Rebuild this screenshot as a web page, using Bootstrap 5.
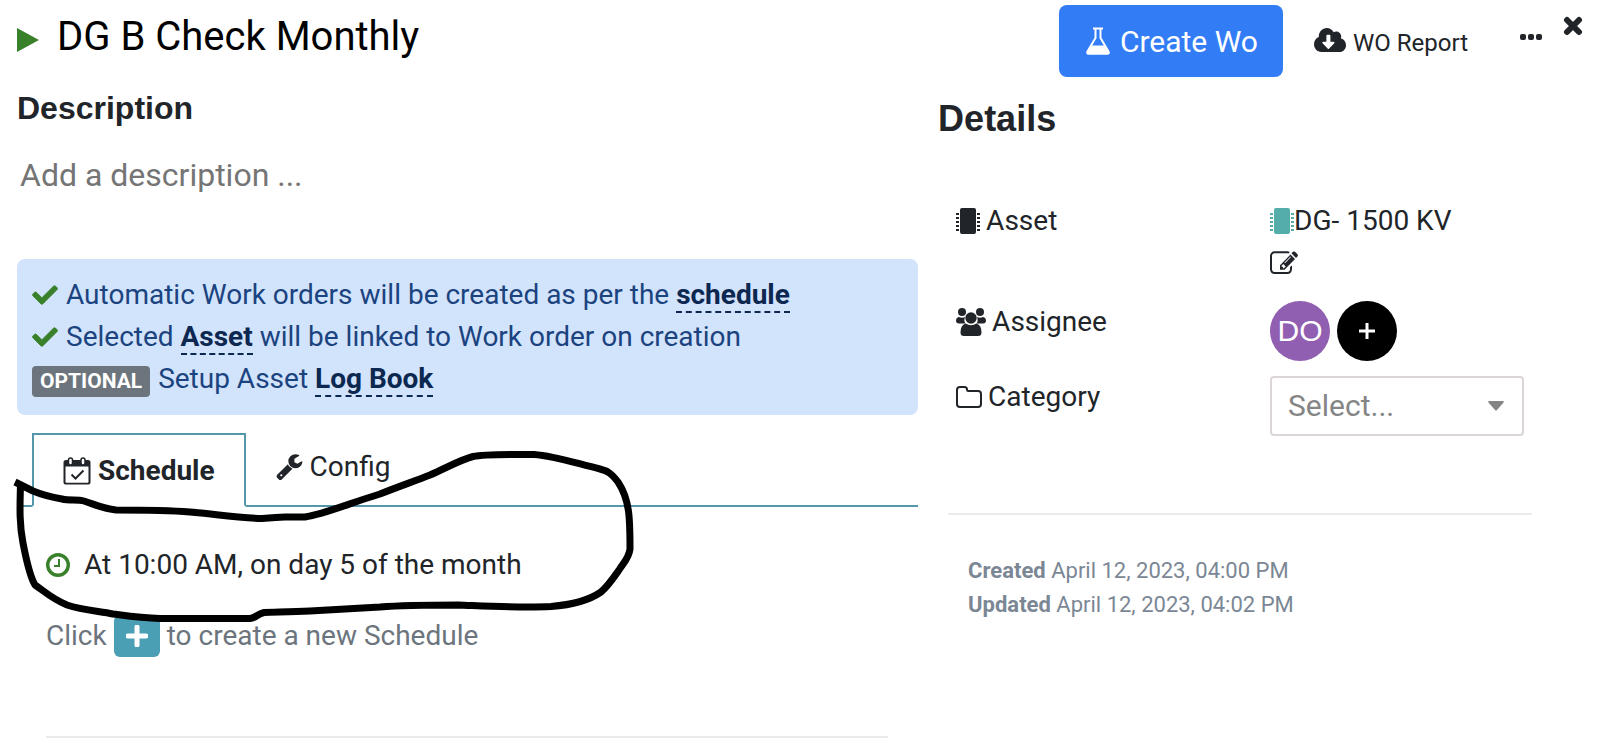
<!DOCTYPE html>
<html lang="en">
<head>
<meta charset="utf-8">
<meta name="viewport" content="width=device-width, initial-scale=1">
<title>DG B Check Monthly</title>
<link href="https://cdn.jsdelivr.net/npm/bootstrap@5.3.0/dist/css/bootstrap.min.css" rel="stylesheet">
<style>
  body { font-family: Roboto, "Liberation Sans", sans-serif; font-size: 28px; line-height: 42px; color: #212529; background: #fff; }
  svg { flex-shrink: 0; }
  .pane-main { flex: 0 0 58%; padding: 0 18px 0 17px; min-width: 0; }
  .pane-side { flex: 1 1 0; padding: 5px 31px 0 2px; min-width: 0; }
  .wo-title { font-size: 40px; line-height: 74px; font-weight: 400; color: #000; gap: 18px; }
  .sub-title { font-family: "Liberation Sans", sans-serif; font-weight: 700; font-size: 32px; line-height: 48px; margin: 10px 0 19px; }
  .desc-input { border: 0; padding: 0 3px; font-size: 32px; height: 48px; line-height: 48px; margin-bottom: 60px; color: #212529; }
  .desc-input::placeholder { color: #757575; opacity: 1; }
  .info-box { background: #d2e3fc; color: #1b437f; border: 0; border-radius: 8px; padding: 15px; margin-bottom: 18px; }
  .info-box a { color: #0c2850; font-weight: 700; text-decoration: none; border-bottom: 2px dashed #0c2850; }
  .info-line { gap: 8px; }
  .opt-tag { background: #6c757d; font-size: 21px; font-weight: 700; line-height: 31px; padding: 0 8px; border-radius: 4px; margin-top: 4px; }
  .wo-tabs { padding-left: 15px; border-bottom: 2px solid #5497ab; }
  .wo-tabs .nav-link { color: #212529; border: 0; border-radius: 0; padding: 13px 30px 16px; gap: 7px; line-height: 42px; }
  .wo-tabs .nav-link.active { color: #212529; border: 2px solid #5497ab; border-bottom-color: #fff; padding: 15px 29px 13px; margin-bottom: -2px; font-weight: 700; gap: 7px; }
  .rule { height: 2px; border: 0; opacity: 1; background: #ebebeb; }
  .sched { padding: 37px 30px 0 29px; }
  .sched-line { gap: 14px; margin-bottom: 29px; }
  .sched-new { gap: 7px; color: #6c757d; }
  .add-btn { width: 46px; height: 42px; padding: 0; background: #4a9fb5; border: 0; border-radius: 6px; }
  .sched .rule { margin: 79px 0 0; }
  .create-btn { background: #327df6; border: 0; border-radius: 8px; height: 72px; padding: 0 25px; font-size: 30px; gap: 8px; }
  .plain-btn { border: 0; padding: 0; background: none; color: #212529; }
  .report-btn { height: 76px; font-size: 24px; gap: 7px; margin: 0 51px 0 31px; }
  .more-btn { height: 64px; margin-right: 20px; }
  .close-btn { height: 42px; }
  .top-row { height: 72px; }
  .side-title { font-family: "Liberation Sans", sans-serif; font-weight: 700; font-size: 36px; line-height: 54px; margin: 15px 0 54px; }
  .fields { margin-left: 10px; margin-right: 7px; }
  .fields .row { --bs-gutter-x: 16px; margin: 0 0 15px; }
  .fields .row > * { padding: 0 8px; }
  .field-name { gap: 6px; height: 42px; }
  .edit-btn { height: 40px; }
  .face { width: 60px; height: 60px; background: #915fb1; color: #fff; font: 30px/60px "Liberation Sans", sans-serif; }
  .face-add { background: #000; }
  .cat-select { width: 254px; height: 60px; font-size: 30px; line-height: 42px; color: #858585; border: 2px solid #dbd5d7; border-radius: 4px; padding: 0 44px 0 16px;
    background-image: url("data:image/svg+xml,%3Csvg xmlns='http://www.w3.org/2000/svg' viewBox='0 0 16 10'%3E%3Cpath d='M1 0h14l1 1-7 8q-1 1-2 0L0 1z' fill='%23858585'/%3E%3C/svg%3E"); background-size: 16px 10px; background-position: right 18px center; }
  .fields .rule { margin: 77px 44px 39px 0; }
  .stamps { font-size: 22px; line-height: 34px; color: #7b8795; padding-left: 20px; }
  .ink { left: 0; top: 0; pointer-events: none; }
</style>
</head>
<body>
<main class="d-flex position-relative">
  <section class="pane-main">
    <h1 class="wo-title d-flex align-items-center mb-0">
      <svg width="22" height="24" viewBox="0 0 22 24" style="margin-top:6px"><path d="M0 0l22 12L0 24z" fill="#38802a"/></svg>
      DG B Check Monthly
    </h1>
    <h2 class="sub-title"><label for="desc">Description</label></h2>
    <input id="desc" class="desc-input d-block w-100" type="text" placeholder="Add a description ...">
    <div class="info-box">
      <div class="info-line d-flex align-items-center">
        <svg width="26" height="26" viewBox="-10 0 532 512"><path fill="#38802a" stroke="#38802a" stroke-width="16" d="M173.898 439.404l-166.4-166.4c-9.997-9.997-9.997-26.206 0-36.204l36.203-36.204c9.997-9.998 26.207-9.998 36.204 0L192 312.690 432.095 72.596c9.997-9.997 26.207-9.997 36.204 0l36.203 36.204c9.997 9.997 9.997 26.206 0 36.204l-294.400 294.401c-9.998 9.997-26.207 9.997-36.204-.001z"/></svg>
        <span>Automatic Work orders will be created as per the <a href="#">schedule</a></span>
      </div>
      <div class="info-line d-flex align-items-center">
        <svg width="26" height="26" viewBox="-10 0 532 512"><path fill="#38802a" stroke="#38802a" stroke-width="16" d="M173.898 439.404l-166.4-166.4c-9.997-9.997-9.997-26.206 0-36.204l36.203-36.204c9.997-9.998 26.207-9.998 36.204 0L192 312.690 432.095 72.596c9.997-9.997 26.207-9.997 36.204 0l36.203 36.204c9.997 9.997 9.997 26.206 0 36.204l-294.400 294.401c-9.998 9.997-26.207 9.997-36.204-.001z"/></svg>
        <span>Selected <a href="#">Asset</a> will be linked to Work order on creation</span>
      </div>
      <div class="info-line d-flex align-items-center">
        <span class="badge opt-tag">OPTIONAL</span>
        <span>Setup Asset <a href="#">Log Book</a></span>
      </div>
    </div>
    <ul class="nav nav-tabs wo-tabs" role="tablist">
      <li class="nav-item" role="presentation"><button class="nav-link active d-flex align-items-center" type="button" role="tab" aria-selected="true">
        <svg width="28" height="28" viewBox="0 0 28 28"><path d="M3 3h22q2.500 0 2.500 2.500V25.500q0 2-2 2H2.500q-2 0-2-2V5.500Q.5 3 3 3zM2.500 9.500V25q0 .7.700.7H24.800q.7 0 .7-.7V9.500z" fill="#212529" fill-rule="evenodd"/><rect x="5.500" y="1" width="4" height="7" rx="2" fill="#fff" stroke="#212529" stroke-width="1.500"/><rect x="18" y="1" width="4" height="7" rx="2" fill="#fff" stroke="#212529" stroke-width="1.500"/><path d="M8.500 17.500l4 4 8-8" fill="none" stroke="#212529" stroke-width="2"/></svg>
        Schedule</button></li>
      <li class="nav-item" role="presentation"><button class="nav-link d-flex align-items-center" type="button" role="tab" aria-selected="false">
        <svg width="27" height="26" viewBox="20 120 1642 1652"><path fill="#212529" d="M384 1472q0-26-19-45t-45-19-45 19-19 45 19 45 45 19 45-19 19-45zm644-420l-682 682q-37 37-90 37-52 0-91-37l-106-108q-38-36-38-90 0-53 38-91l681-681q39 98 114.500 173.500t173.500 114.500zm634-435q0 39-23 106-47 134-164.500 217.500t-258.500 83.500q-185 0-316.500-131.500t-131.500-316.500 131.500-316.500 316.500-131.500q58 0 121.500 16.500t107.500 46.500q16 11 16 28t-16 28l-293 169v224l193 107q5-3 79-48.500t135.500-81 70.500-35.500q15 0 23.500 10t8.500 25z"/></svg>
        Config</button></li>
    </ul>
    <div class="sched">
      <div class="sched-line d-flex align-items-center">
        <svg width="24" height="24" viewBox="0 0 24 24" fill="none" stroke="#38802a"><circle cx="12" cy="12" r="10.300" stroke-width="3.400"/><path d="M13 6v7H8" stroke-width="2"/></svg>
        <span>At 10:00 AM, on day 5 of the month</span>
      </div>
      <div class="sched-new d-flex align-items-center">
        <span>Click</span>
        <button class="add-btn btn d-flex align-items-center justify-content-center" type="button" aria-label="Add schedule"><svg width="22" height="22" viewBox="0 0 22 22"><path d="M11 2v18M2 11h18" stroke="#fff" stroke-width="5" stroke-linecap="round"/></svg></button>
        <span>to create a new Schedule</span>
      </div>
      <hr class="rule">
    </div>
  </section>

  <aside class="pane-side">
    <div class="top-row d-flex align-items-start justify-content-end">
      <button class="create-btn btn btn-primary d-flex align-items-center text-nowrap" type="button">
        <svg width="28" height="28" viewBox="0 0 28 28"><path d="M9 1.500h10M11.500 2v9L3.500 24.500q-1 2.200 1.200 2.200h18.600q2.200 0 1.200-2.200L16.500 11V2" fill="none" stroke="#fff" stroke-width="2"/><path d="M8 18.500h12l5 7.500H3z" fill="#fff"/></svg>
        Create Wo</button>
      <button class="plain-btn report-btn d-flex align-items-center text-nowrap" type="button">
        <svg width="32" height="24" viewBox="0 32 640 448" preserveAspectRatio="none" style="margin-bottom:6px"><path fill="#212529" d="M537.600 226.600c4.100-10.700 6.400-22.400 6.400-34.600 0-53-43-96-96-96-19.700 0-38.100 6-53.300 16.200C367 64.200 315.300 32 256 32c-88.400 0-160 71.600-160 160 0 2.700.1 5.400.2 8.100C40.200 219.800 0 273.200 0 336c0 79.500 64.500 144 144 144h368c70.700 0 128-57.300 128-128 0-61.900-44-113.600-102.400-125.400zm-132.900 88.700L299.300 420.700c-6.200 6.200-16.400 6.200-22.600 0L171.300 315.300c-10.100-10.100-2.900-27.300 11.300-27.300H248V176c0-8.800 7.200-16 16-16h48c8.800 0 16 7.200 16 16v112h65.400c14.200 0 21.400 17.200 11.300 27.300z"/></svg>
        WO Report</button>
      <button class="plain-btn more-btn d-flex align-items-center" type="button" aria-label="More"><svg width="24" height="6" viewBox="0 0 24 6" fill="#212529"><rect x="1" width="6" height="6" rx="2"/><rect x="9" width="6" height="6" rx="2"/><rect x="17" width="6" height="6" rx="2"/></svg></button>
      <button class="plain-btn close-btn d-flex align-items-center" type="button" aria-label="Close"><svg width="20" height="20" viewBox="0 0 20 20"><path d="M4 4l12 12M16 4L4 16" stroke="#212529" stroke-width="6" stroke-linecap="round"/></svg></button>
    </div>
    <h2 class="side-title">Details</h2>
    <div class="fields">
      <div class="row">
        <div class="col-6"><div class="field-name d-flex align-items-center">
          <svg width="24" height="26" viewBox="0 0 24 26"><path d="M1.500 5v18M22.500 5v18" stroke="#212529" stroke-width="3" stroke-dasharray="2 2"/><rect x="4" width="16" height="26" rx="2" fill="#212529"/></svg>
          Asset</div></div>
        <div class="col-6">
          <div class="d-flex align-items-center"><svg width="24" height="26" viewBox="0 0 24 26"><path d="M1.500 5v18M22.500 5v18" stroke="#55ada9" stroke-width="3" stroke-dasharray="2 2"/><rect x="4" width="16" height="26" rx="2" fill="#55ada9"/></svg>DG- 1500 KV</div>
          <button class="plain-btn edit-btn d-flex align-items-center mb-1" type="button" aria-label="Edit asset"><svg width="28" height="23" viewBox="0 110 1792 1426" preserveAspectRatio="none"><path fill="#212529" d="M888 1184l116-116-152-152-116 116v56h96v96h56zm440-720q-16-16-33 1l-350 350q-17 17-1 33t33-1l350-350q17-17 1-33zm80 594v190q0 119-84.500 203.500t-203.500 84.500h-832q-119 0-203.500-84.500t-84.500-203.500v-832q0-119 84.500-203.500t203.500-84.500h832q63 0 117 25 15 7 18 23 3 17-9 29l-49 49q-14 14-32 8-23-6-45-6h-832q-66 0-113 47t-47 113v832q0 66 47 113t113 47h832q66 0 113-47t47-113v-126q0-13 9-22l64-64q15-15 35-7t20 29zm-96-738l288 288-672 672h-288v-288zm444 132l-92 92-288-288 92-92q28-28 68-28t68 28l152 152q28 28 28 68t-28 68z"/></svg></button>
        </div>
      </div>
      <div class="row">
        <div class="col-6"><div class="field-name d-flex align-items-center">
          <svg width="30" height="28" viewBox="0 0 30 28" fill="#212529"><circle cx="6" cy="4" r="4"/><circle cx="24" cy="4" r="4"/><path d="M3 9q3 1.500 6 0-1.500 4 .5 6.500H3Q0 15.500 0 12.500T3 9zM27 9q-3 1.500-6 0 1.500 4-.5 6.500H27q3 0 3-3T27 9z"/><circle cx="15" cy="10" r="5.700"/><path d="M9.500 15.500q5.500 3.500 11 0 5 1.500 5 9 0 3.500-3.500 3.500H8q-3.500 0-3.500-3.500 0-7.500 5-9z"/></svg>
          Assignee</div></div>
        <div class="col-6 d-flex" style="gap:7px">
          <span class="face rounded-circle text-center">DO</span>
          <button class="face face-add border-0 p-0 rounded-circle d-flex align-items-center justify-content-center" type="button" aria-label="Add assignee"><svg width="16" height="16" viewBox="0 0 16 16"><path d="M8 0v16M0 8h16" stroke="#fff" stroke-width="3"/></svg></button>
        </div>
      </div>
      <div class="row mb-0">
        <div class="col-6"><label class="field-name d-flex align-items-center" for="cat">
          <svg width="26" height="22" viewBox="0 0 26 22"><path d="M1 4q0-3 3-3h4.500Q11 1 11 3.500q0 1.500 1.500 1.500H22q3 0 3 3v10q0 3-3 3H4q-3 0-3-3z" fill="none" stroke="#212529" stroke-width="2"/></svg>
          Category</label></div>
        <div class="col-6"><select id="cat" class="form-select cat-select"><option>Select...</option></select></div>
      </div>
      <hr class="rule">
      <div class="stamps">
        <div><b>Created</b> April 12, 2023, 04:00 PM</div>
        <div><b>Updated</b> April 12, 2023, 04:02 PM</div>
      </div>
    </div>
  </aside>

  <!-- freehand loop drawn over the schedule -->
  <svg class="ink position-absolute" width="650" height="640" viewBox="0 0 650 640" fill="none" stroke="#000" stroke-width="7" stroke-linejoin="round"><path d="M15 482L33 491Q45 496 62 499C70 501 77 499 84 501C96 505 104 509 116 510C145 510 165 510 190 512C215 514 235 518 262 518.500C276 518 276 517 285 517H305C325 514 350 503 380 494C400 486 415 481 430 475C448 467 460 460 473 456.500C485 454 505 454.500 534 454.500C555 456 575 463 600 469C608 471 612 474 618 482C630 500 630 520 630 549C629 558 624 562 619 570C612 580 608 586 601 592C588 601 570 605 551 606.500C520 608 485 606 458 605C435 605 405 605 380 607L310 611C290 612 275 612 264 612.500C257 614 256 618 250 618.500H160C140 618 128 616 113 614C97 611 82 610 67 605C52 599 44 591 35 585C29 575 26 558 23 543C19 522 20 505 20.500 484"/></svg>
</main>
<script src="https://cdn.jsdelivr.net/npm/bootstrap@5.3.0/dist/js/bootstrap.bundle.min.js"></script>
</body>
</html>
